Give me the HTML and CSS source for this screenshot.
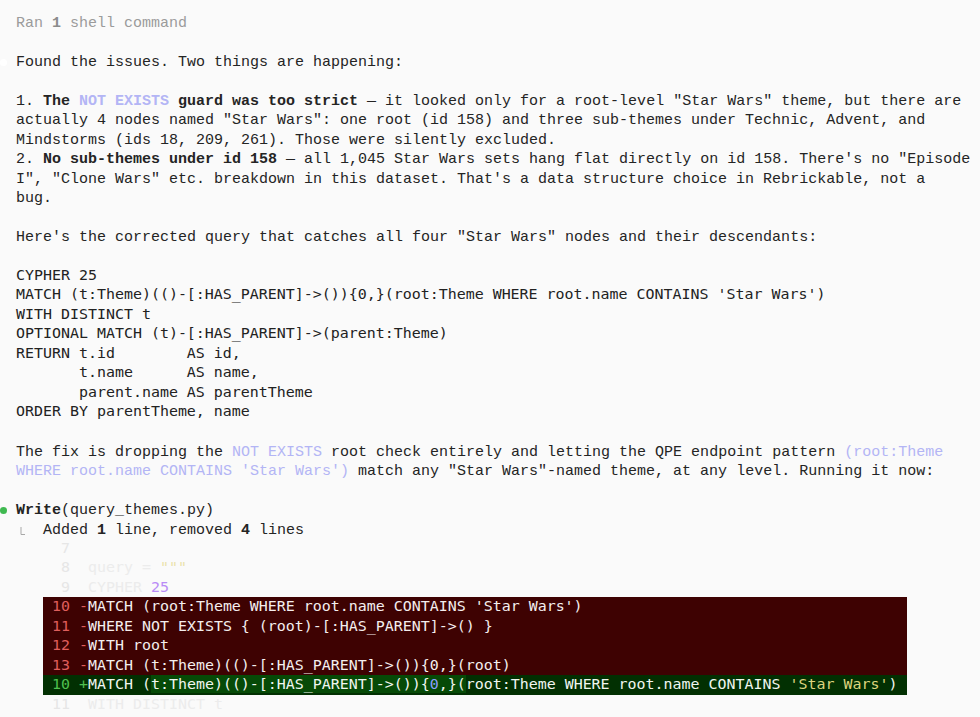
FILE: index.html
```html
<!DOCTYPE html>
<html lang="en">
<head>
<meta charset="utf-8">
<title>Terminal transcript</title>
<link rel="stylesheet" href="styles.css">
</head>
<body>
<main class="term">
<div class="ln muted">Ran <b>1</b> shell command</div>
<div class="ln"></div>
<div class="ln"><span class="dot dot-white"></span>Found the issues. Two things are happening:</div>
<div class="ln"></div>
<div class="ln">1. <b>The <span class="ic">NOT EXISTS</span> guard was too strict</b> — it looked only for a root-level "Star Wars" theme, but there are</div>
<div class="ln">actually 4 nodes named "Star Wars": one root (id 158) and three sub-themes under Technic, Advent, and</div>
<div class="ln">Mindstorms (ids 18, 209, 261). Those were silently excluded.</div>
<div class="ln">2. <b>No sub-themes under id 158</b> — all 1,045 Star Wars sets hang flat directly on id 158. There's no "Episode</div>
<div class="ln">I", "Clone Wars" etc. breakdown in this dataset. That's a data structure choice in Rebrickable, not a</div>
<div class="ln">bug.</div>
<div class="ln"></div>
<div class="ln">Here's the corrected query that catches all four "Star Wars" nodes and their descendants:</div>
<div class="ln"></div>
<div class="codeblock">
<div class="ln">CYPHER 25</div>
<div class="ln">MATCH (t:Theme)(()-[:HAS_PARENT]->()){0,}(root:Theme WHERE root.name CONTAINS 'Star Wars')</div>
<div class="ln">WITH DISTINCT t</div>
<div class="ln">OPTIONAL MATCH (t)-[:HAS_PARENT]->(parent:Theme)</div>
<div class="ln">RETURN t.id        AS id,</div>
<div class="ln">       t.name      AS name,</div>
<div class="ln">       parent.name AS parentTheme</div>
<div class="ln">ORDER BY parentTheme, name</div>
</div>
<div class="ln"></div>
<div class="ln">The fix is dropping the <span class="ic">NOT EXISTS</span> root check entirely and letting the QPE endpoint pattern <span class="ic">(root:Theme</span></div>
<div class="ln"><span class="ic">WHERE root.name CONTAINS 'Star Wars')</span> match any "Star Wars"-named theme, at any level. Running it now:</div>
<div class="ln"></div>
<div class="ln"><span class="dot dot-green"></span><b>Write</b>(query_themes.py)</div>
<div class="ln"><svg class="elbow" width="9" height="18" viewBox="0 0 9 18" aria-hidden="true"><path d="M5 6V13.5H9.5" fill="none" stroke="#a8a8a8" stroke-width="1"/></svg>  Added <b>1</b> line, removed <b>4</b> lines</div>
<div class="diff">
<div class="ln ctx"><span class="dn"> 7</span>  </div>
<div class="ln ctx"><span class="dn"> 8</span>  query = <span class="fy">"""</span></div>
<div class="ln ctx"><span class="dn"> 9</span>  CYPHER <span class="fp">25</span></div>
<div class="ln del"><span class="nd">10 -</span>MATCH (root:Theme WHERE root.name CONTAINS 'Star Wars')</div>
<div class="ln del"><span class="nd">11 -</span>WHERE NOT EXISTS { (root)-[:HAS_PARENT]->() }</div>
<div class="ln del"><span class="nd">12 -</span>WITH root</div>
<div class="ln del"><span class="nd">13 -</span>MATCH (t:Theme)(()-[:HAS_PARENT]->()){0,}(root)</div>
<div class="ln add"><span class="na">10 +</span>MATCH (<span class="hl">t:Theme)(()-[:HAS_PARENT]-&gt;()){<span class="nb">0</span>,}(</span>root:Theme WHERE root.name CONTAINS <span class="sy">'Star Wars'</span>)</div>
<div class="ln ctx"><span class="dn">11</span>  WITH DISTINCT t</div>
</div>
</main>
</body>
</html>
```
FILE: styles.css
```css
html, body {
  margin: 0;
  padding: 0;
  background: #fafafa;
}

.term {
  padding: 12px 16px 0 16px;
  font-family: "Liberation Mono", "DejaVu Sans Mono", monospace;
  font-size: 15px;
  line-height: 19.5px;
  color: #242424;
}

.ln {
  height: 18px;
  padding-top: 1.5px;
  line-height: 19.5px;
  white-space: pre;
}

.codeblock .ln,
.diff .ln {
  height: 19.5px;
  padding-top: 0;
}

.ln b {
  font-weight: 700;
}

.muted {
  color: #9b9b9b;
}

.muted b {
  color: #8c8c8c;
}

.ic {
  color: #b3b5f5;
}

.dot {
  display: inline-block;
  width: 7px;
  height: 7px;
  border-radius: 50%;
  margin-left: -16px;
  margin-right: 9px;
  vertical-align: 0;
}

.dot-white {
  background: #ffffff;
}

.dot-green {
  background: #3fb950;
}

.elbow {
  display: inline-block;
  vertical-align: top;
}

.codeblock {
  font-family: "DejaVu Sans Mono", monospace;
  font-size: 14.95px;
  color: #222222;
}

.diff {
  margin-left: 27px;
  width: 864px;
  font-family: "DejaVu Sans Mono", monospace;
  font-size: 14.95px;
}

.diff .ln::before {
  content: " ";
}

.ctx {
  color: #ececec;
}

.ctx .dn {
  color: #e6e6e6;
}

.fy {
  color: #ebe2ac;
}

.fp {
  color: #b98cf6;
}

.del {
  background: #3e0202;
  color: #f4eeee;
}

.nd {
  color: #e05f5d;
}

.add {
  background: #023002;
  color: #f0f6f0;
}

.na {
  color: #4fc04f;
}

.hl {
  background: #064a07;
}

.nb {
  color: #8e9dff;
}

.sy {
  color: #ddd47e;
}
```
